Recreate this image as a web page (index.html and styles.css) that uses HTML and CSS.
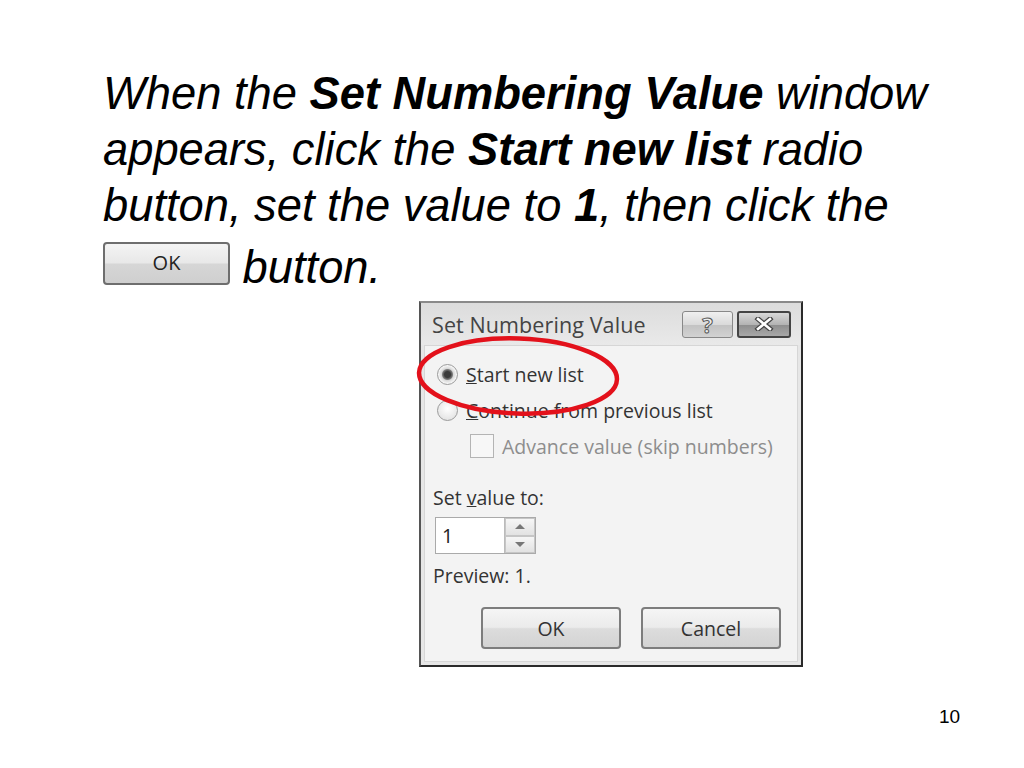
FILE: index.html
```html
<!DOCTYPE html>
<html lang="en">
<head>
    <meta charset="UTF-8">
    <title>Set Numbering Value - Slide 10</title>
    <link rel="stylesheet" href="styles.css">
</head>
<body>
    <div class="slide">
        <p class="prose">
            When the <b>Set Numbering Value</b> window appears, click the <b>Start new list</b> radio
            button, set the value to <b>1</b>, then click the
            <span class="inline-btn">OK</span> button.
        </p>

        <div class="dialog-wrap">
            <div class="dialog">
                <div class="titlebar">
                    <span class="title">Set Numbering Value</span>
                    <div class="caption-btns">
                        <span class="cap-btn help">?</span>
                        <span class="cap-btn close">
                            <svg width="22" height="14" viewBox="0 0 22 14">
                                <path d="M5 2 L17 12 M17 2 L5 12" stroke="#444" stroke-width="5" stroke-linecap="square"/>
                                <path d="M5 2 L17 12 M17 2 L5 12" stroke="#fff" stroke-width="2.6" stroke-linecap="square"/>
                            </svg>
                        </span>
                    </div>
                </div>

                <div class="body">
                    <div class="row">
                        <span class="radio checked"></span>
                        <span><u>S</u>tart new list</span>
                    </div>
                    <div class="row">
                        <span class="radio"></span>
                        <span><u>C</u>ontinue from previous list</span>
                    </div>
                    <div class="row sub disabled">
                        <span class="checkbox"></span>
                        <span>Advance value (skip numbers)</span>
                    </div>

                    <div class="label">Set <u>v</u>alue to:</div>
                    <div class="spin">
                        <span class="spin-value">1</span>
                        <span class="spin-arrows">
                            <span class="arrow up"></span>
                            <span class="arrow down"></span>
                        </span>
                    </div>
                    <div class="preview">Preview: 1.</div>

                    <div class="actions">
                        <span class="btn">OK</span>
                        <span class="btn">Cancel</span>
                    </div>
                </div>
            </div>

            <!-- hand drawn highlight round the radio button -->
            <svg class="highlight" width="214" height="90" viewBox="0 0 214 90">
                <ellipse cx="106" cy="45" rx="99" ry="37.5" fill="none" stroke="#e3111b" stroke-width="4.5" transform="rotate(2 106 45)"/>
            </svg>
        </div>

        <div class="page-num">10</div>
    </div>
</body>
</html>
```

FILE: styles.css
```css
* {
    margin: 0;
    padding: 0;
    box-sizing: border-box;
}

body {
    width: 1024px;
    height: 768px;
    background: #fff;
    font-family: 'Liberation Sans', Arial, sans-serif;
    overflow: hidden;
}

.slide {
    position: relative;
    width: 1024px;
    height: 768px;
    padding: 66px 40px 0 103px;
}

.prose {
    font-style: italic;
    font-size: 45.3px;
    line-height: 56px;
    color: #000;
    width: 870px;
}

.prose b {
    font-weight: bold;
}

.inline-btn {
    display: inline-block;
    overflow: hidden;
    width: 127px;
    height: 43px;
    margin-top: 8px;
    vertical-align: -2px;
    border: 2px solid #6e6e6e;
    border-radius: 4px;
    background: linear-gradient(#f4f4f4 0%, #e8e8e8 48%, #d6d6d6 52%, #cfcfcf 100%);
    font-family: 'Open Sans', sans-serif;
    font-style: normal;
    font-size: 20px;
    line-height: 37px;
    text-align: center;
    color: #222;
}

/* dialog */
.dialog-wrap {
    position: relative;
    width: 384px;
    margin: 5px 0 0 316px;
}

.dialog {
    width: 384px;
    height: 366px;
    border: 2px solid #2a2a2a;
    border-top-color: #8a8a8a;
    border-left-color: #555;
    background: #e6e6e6;
    font-family: 'Open Sans', 'Noto Sans', sans-serif;
    font-size: 19.5px;
    color: #333;
    display: flex;
    flex-direction: column;
}

.titlebar {
    height: 42px;
    display: flex;
    align-items: center;
    justify-content: space-between;
    padding: 0 10px 0 11px;
    background: linear-gradient(#dcdcdc, #e9e9e9);
}

.title {
    color: #444;
    font-size: 21.5px;
    letter-spacing: 0.1px;
}

.caption-btns {
    display: flex;
    gap: 4px;
}

.cap-btn {
    display: flex;
    align-items: center;
    justify-content: center;
    height: 27px;
    border-radius: 3px;
}

.cap-btn.help {
    width: 51px;
    border: 1px solid #888;
    background: linear-gradient(#f0f0f0 0%, #dadada 50%, #c2c2c2 52%, #d2d2d2 100%);
    color: #eee;
    font-weight: bold;
    font-size: 22px;
    -webkit-text-stroke: 1px #555;
}

.cap-btn.close {
    width: 54px;
    border: 2px solid #444;
    background: linear-gradient(#d8d8d8 0%, #b4b4b4 50%, #8e8e8e 52%, #a8a8a8 100%);
}

.body {
    flex: 1;
    margin: 0 3px 3px;
    padding: 10px 0 0 8px;
    background: #f3f3f3;
    border: 1px solid #d6d6d6;
}

.row {
    height: 36px;
    display: flex;
    align-items: center;
    gap: 8px;
    padding-left: 4px;
}

.row.sub {
    padding-left: 37px;
}

.disabled {
    color: #8d8d8d;
}

.radio {
    width: 21px;
    height: 21px;
    border-radius: 50%;
    border: 1px solid #9a9a9a;
    background: radial-gradient(circle at 50% 40%, #fff, #dcdcdc);
}

.radio.checked {
    background: radial-gradient(circle, #3a3a3a 0 3px, #7c7c7c 5px, #d8d8d8 6px, #f6f6f6 9px);
}

.checkbox {
    width: 24px;
    height: 24px;
    border: 1px solid #b4b4b4;
    background: #f7f7f7;
}

.label {
    margin-top: 20px;
}

.spin {
    display: flex;
    width: 101px;
    height: 37px;
    margin: 6px 0 0 2px;
    border: 1px solid #aaa;
    background: #fff;
}

.spin-value {
    flex: 1;
    padding-left: 6px;
    line-height: 35px;
    color: #222;
}

.spin-arrows {
    width: 31px;
    display: flex;
    flex-direction: column;
    border-left: 1px solid #bbb;
}

.arrow {
    flex: 1;
    display: flex;
    align-items: center;
    justify-content: center;
    border: 1px solid #c6c6c6;
    background: linear-gradient(#f6f6f6, #e2e2e2);
}

.arrow::after {
    content: "";
    border-left: 5px solid transparent;
    border-right: 5px solid transparent;
}

.arrow.up::after {
    border-bottom: 5px solid #777;
}

.arrow.down::after {
    border-top: 5px solid #777;
}

.preview {
    margin-top: 8px;
}

.actions {
    display: flex;
    gap: 20px;
    margin: 18px 0 0 48px;
}

.btn {
    display: flex;
    align-items: center;
    justify-content: center;
    width: 140px;
    height: 42px;
    border: 2px solid #7d7d7d;
    border-radius: 4px;
    background: linear-gradient(#f5f5f5 0%, #ebebeb 48%, #dcdcdc 52%, #d3d3d3 100%);
    color: #333;
}

.highlight {
    position: absolute;
    left: -7px;
    top: 30px;
}

.page-num {
    position: absolute;
    left: 939px;
    top: 706px;
    font-size: 19px;
    color: #000;
}
```
